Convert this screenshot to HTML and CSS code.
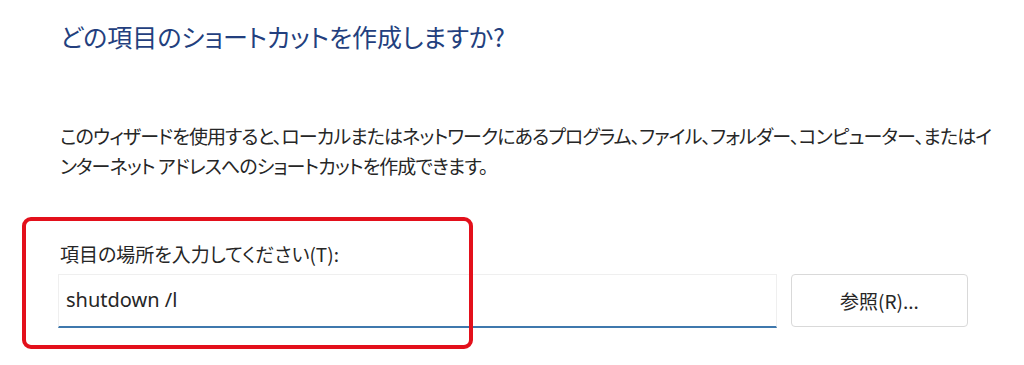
FILE: index.html
```html
<!DOCTYPE html>
<html lang="ja">
<head>
<meta charset="utf-8">
<link rel="stylesheet" href="styles.css">
</head>
<body>
<div class="page">
  <h1 class="title">どの項目のショートカットを作成しますか?</h1>
  <p class="desc">このウィザードを使用すると、ローカルまたはネットワークにあるプログラム、ファイル、フォルダー、コンピューター、またはイ<br>ンターネット アドレスへのショートカットを作成できます。</p>
  <div class="form">
    <div class="field">
      <label class="label">項目の場所を入力してください(T):</label>
      <div class="input">shutdown /l</div>
    </div>
    <button class="btn">参照(R)...</button>
    <div class="highlight"></div>
  </div>
</div>
</body>
</html>
```
FILE: styles.css
```css
html, body {
  margin: 0;
  padding: 0;
  background: #ffffff;
}
body {
  width: 1024px;
  height: 365px;
  overflow: hidden;
  font-family: "Noto Sans", "Noto Sans CJK JP", sans-serif;
  color: #2b2b2b;
}
.page {
  padding: 21px 0 0 60px;
}
.title {
  margin: 0;
  font-family: "Noto Sans CJK JP", sans-serif;
  font-weight: 400;
  font-size: 25px;
  line-height: 30px;
  color: #233f7e;
  font-feature-settings: "palt";
}
.desc {
  margin: 70px 0 0 0;
  font-family: "Noto Sans CJK JP", sans-serif;
  font-size: 19px;
  line-height: 30px;
  letter-spacing: -0.9px;
  white-space: nowrap;
  color: #262626;
  font-feature-settings: "palt";
}
.form {
  position: relative;
  display: flex;
  align-items: flex-end;
  gap: 14px;
  margin-top: 61px;
}
.field {
  display: flex;
  flex-direction: column;
  gap: 8px;
}
.label {
  font-family: "Noto Sans CJK JP", sans-serif;
  font-size: 19px;
  line-height: 24px;
  color: #262626;
  font-feature-settings: "palt";
}
.input {
  box-sizing: border-box;
  width: 719px;
  height: 54px;
  margin-left: -2px;
  padding: 10px 0 0 7px;
  border: 1px solid #efefef;
  border-bottom: 2px solid #3f78ad;
  font-size: 20px;
  line-height: 30px;
  color: #262626;
}
.btn {
  box-sizing: border-box;
  width: 177px;
  height: 53px;
  margin-bottom: 1px;
  background: #ffffff;
  border: 1px solid #d9d9d9;
  border-radius: 4px;
  font-family: "Noto Sans CJK JP", sans-serif;
  font-size: 19px;
  color: #262626;
  font-feature-settings: "palt";
}
.highlight {
  position: absolute;
  left: -38px;
  top: -25px;
  width: 451px;
  height: 132px;
  box-sizing: border-box;
  border: 4px solid #e3101b;
  border-radius: 9px;
  pointer-events: none;
}
```
